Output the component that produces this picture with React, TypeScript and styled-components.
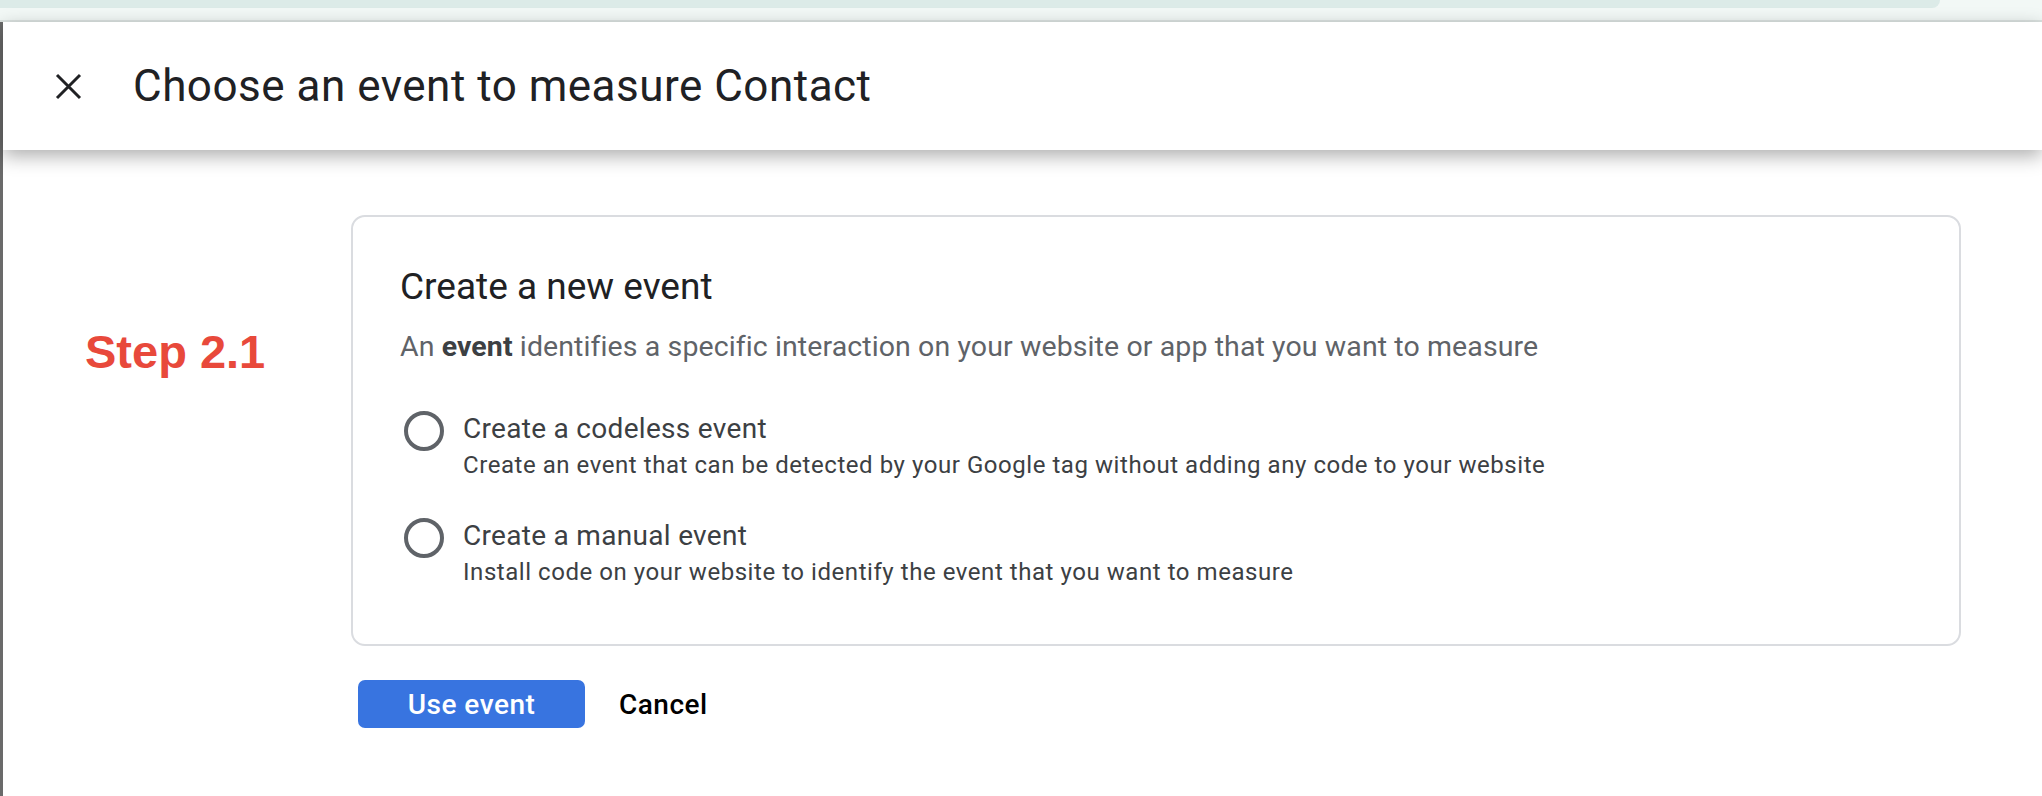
import styled, { createGlobalStyle } from 'styled-components';

const GlobalStyle = createGlobalStyle`
  html, body {
    margin: 0;
    padding: 0;
    background: #ffffff;
  }
  body {
    font-family: Roboto, "Liberation Sans", Arial, sans-serif;
    color: #202124;
    width: 2042px;
    height: 796px;
    overflow: hidden;
  }
`;

const TopStrip = styled.div`
  height: 20px;
  background: #f2f8f6;
  border-bottom: 2px solid #dce3e1;
  display: flex;
  align-items: flex-start;
`;

const TealBar = styled.div`
  width: 1940px;
  height: 8px;
  background: #dcebe8;
  border-bottom-right-radius: 14px;
`;

const Frame = styled.div`
  display: flex;
  height: 774px;
`;

const Rail = styled.div`
  width: 3px;
  background: #6a6a6a;
  flex-shrink: 0;
`;

const Panel = styled.div`
  flex: 1;
  display: flex;
  flex-direction: column;
`;

const Header = styled.header`
  position: relative;
  z-index: 1;
  height: 128px;
  display: flex;
  align-items: center;
  padding-left: 52px;
  gap: 51px;
  background: #ffffff;
  box-shadow: 0 6px 18px rgba(0, 0, 0, 0.32);
`;

const CloseButton = styled.button`
  width: 27px;
  height: 27px;
  padding: 0;
  border: none;
  background: none;
  display: flex;
  align-items: center;
  justify-content: center;
  color: #202124;
  cursor: pointer;
`;

const Title = styled.h1`
  margin: 0;
  font-family: Roboto, "Liberation Sans", sans-serif;
  font-size: 44px;
  font-weight: 400;
  letter-spacing: 0.5px;
  color: #202124;
`;

const Body = styled.main`
  display: flex;
  padding-top: 65px;
`;

const StepCol = styled.div`
  width: 348px;
  flex-shrink: 0;
  padding-left: 82px;
  padding-top: 110px;
  box-sizing: border-box;
`;

const StepLabel = styled.div`
  font-family: "Liberation Sans", Arial, sans-serif;
  font-weight: 700;
  font-size: 47px;
  line-height: 54px;
  color: #e8493b;
`;

const Content = styled.div`
  display: flex;
  flex-direction: column;
`;

const Card = styled.section`
  width: 1610px;
  height: 431px;
  box-sizing: border-box;
  border: 2px solid #dadce0;
  border-radius: 14px;
  padding: 48px 47px 0;
`;

const CardTitle = styled.h2`
  margin: 0;
  font-size: 37px;
  line-height: 44px;
  font-weight: 400;
  color: #202124;
`;

const Description = styled.p`
  margin: 20px 0 0;
  font-size: 28.5px;
  line-height: 36px;
  color: #5f6368;
  letter-spacing: 0.1px;

  b {
    font-weight: 700;
    color: #3c4043;
  }
`;

const Options = styled.div`
  display: flex;
  flex-direction: column;
  gap: 35px;
  margin-top: 46px;
`;

const Option = styled.label`
  display: flex;
  align-items: flex-start;
  gap: 19px;
  cursor: pointer;
`;

const Radio = styled.span`
  width: 40px;
  height: 40px;
  box-sizing: border-box;
  border: 4px solid #5f6368;
  border-radius: 50%;
  margin-left: 4px;
  flex-shrink: 0;
`;

const OptionText = styled.div`
  display: flex;
  flex-direction: column;
`;

const OptionTitle = styled.div`
  font-size: 28px;
  line-height: 36px;
  color: #3c4043;
  letter-spacing: 0.3px;
`;

const OptionSub = styled.div`
  font-size: 24px;
  line-height: 36px;
  color: #3c4043;
  letter-spacing: 0.55px;
`;

const Actions = styled.div`
  display: flex;
  align-items: center;
  gap: 34px;
  margin-top: 34px;
  padding-left: 7px;
`;

const Button = styled.button<{ $primary?: boolean }>`
  height: 48px;
  width: ${(p) => (p.$primary ? '227px' : 'auto')};
  padding: 0;
  border: none;
  border-radius: 7px;
  font-family: Roboto, "Liberation Sans", sans-serif;
  font-size: 28px;
  font-weight: 500;
  letter-spacing: 0.5px;
  background: ${(p) => (p.$primary ? '#3874e0' : 'transparent')};
  color: ${(p) => (p.$primary ? '#ffffff' : '#000000')};
  cursor: pointer;
`;

const options = [
  {
    title: 'Create a codeless event',
    sub: 'Create an event that can be detected by your Google tag without adding any code to your website',
  },
  {
    title: 'Create a manual event',
    sub: 'Install code on your website to identify the event that you want to measure',
  },
];

export default function App() {
  return (
    <>
      <GlobalStyle />
      <TopStrip>
        <TealBar />
      </TopStrip>
      <Frame>
        <Rail />
        <Panel>
          <Header>
            <CloseButton aria-label="Close">
              <svg width="27" height="27" viewBox="0 0 27 27">
                <path d="M2 2L25 25M25 2L2 25" stroke="currentColor" strokeWidth="3" fill="none" />
              </svg>
            </CloseButton>
            <Title>Choose an event to measure Contact</Title>
          </Header>
          <Body>
            <StepCol>
              <StepLabel>Step 2.1</StepLabel>
            </StepCol>
            <Content>
              <Card>
                <CardTitle>Create a new event</CardTitle>
                <Description>
                  An <b>event</b> identifies a specific interaction on your website or app that you want to measure
                </Description>
                <Options>
                  {options.map((o) => (
                    <Option key={o.title}>
                      <Radio />
                      <OptionText>
                        <OptionTitle>{o.title}</OptionTitle>
                        <OptionSub>{o.sub}</OptionSub>
                      </OptionText>
                    </Option>
                  ))}
                </Options>
              </Card>
              <Actions>
                <Button $primary>Use event</Button>
                <Button>Cancel</Button>
              </Actions>
            </Content>
          </Body>
        </Panel>
      </Frame>
    </>
  );
}
